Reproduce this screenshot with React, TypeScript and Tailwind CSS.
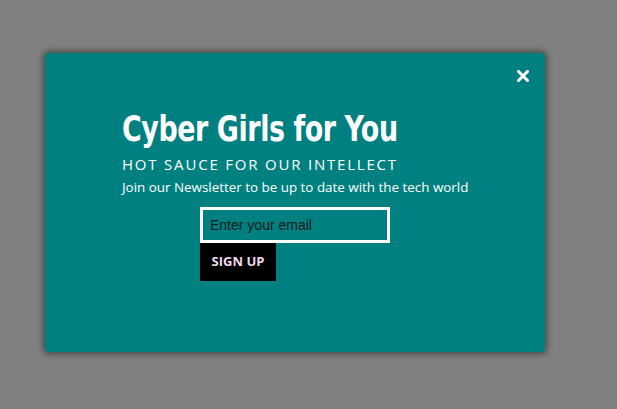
import React from 'react';

export default function App() {
  return (
    <div className="min-h-[409px] w-full bg-[#808080] pt-[53px] pl-[45px]">
      <div className="relative h-[299px] w-[500px] rounded-[4px] bg-[#008080] shadow-[0_0_6px_2px_rgba(0,0,0,0.45)]">
        <button className="absolute right-[16px] top-[17px] text-white" aria-label="close">
          <svg width="12" height="12" viewBox="0 0 12 12">
            <path d="M1.5 1.5 L10.5 10.5 M10.5 1.5 L1.5 10.5" stroke="white" strokeWidth="3" strokeLinecap="square" />
          </svg>
        </button>
        <div className="pl-[77px] pt-[56px] text-white">
          <h1 className="inline-block origin-left scale-x-[0.83] text-[36px] font-bold leading-[40px] tracking-[-0.5px] whitespace-nowrap [font-family:'DejaVu_Sans_Condensed','DejaVu_Sans',sans-serif] [font-stretch:condensed]">
            Cyber Girls for You
          </h1>
          <h2 className="mt-[5px] text-[15px] leading-[20px] tracking-[1.8px] [font-family:'Open_Sans',sans-serif]">
            HOT SAUCE FOR OUR INTELLECT
          </h2>
          <p className="mt-[3px] text-[13.4px] leading-[20px] [font-family:'Open_Sans',sans-serif]">
            Join our Newsletter to be up to date with the tech world
          </p>
        </div>
        <form className="ml-[155px] mt-[10px] flex flex-col items-start">
          <input
            type="email"
            placeholder="Enter your email"
            className="h-[36px] w-[190px] border-[3px] border-white bg-transparent px-[7px] text-[14px] text-[#111] outline-none placeholder:text-[#1a1a1a] [font-family:'Liberation_Sans',sans-serif]"
          />
          <button
            type="button"
            className="h-[38px] w-[76px] bg-black text-[13px] font-bold text-[#f0d8ec] [font-family:'Open_Sans',sans-serif]"
          >
            SIGN UP
          </button>
        </form>
      </div>
    </div>
  );
}
